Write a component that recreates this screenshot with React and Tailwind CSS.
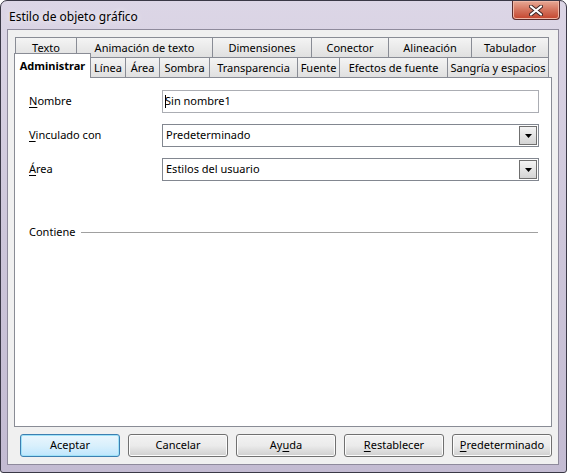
import React from "react";

const font = { fontFamily: '"Noto Sans", "Segoe UI", sans-serif' };

// back row of tabs, widths taken from the shared borders
const RowOne = [
  ["Texto", 62],
  ["Animación de texto", 137],
  ["Dimensiones", 100],
  ["Conector", 78],
  ["Alineación", 84],
  ["Tabulador", 78],
];

const RowTwo = [
  ["Línea", 36],
  ["Área", 35],
  ["Sombra", 51],
  ["Transparencia", 89],
  ["Fuente", 43],
  ["Efectos de fuente", 109],
  ["Sangría y espacios", 102],
];

const tabBase =
  "flex items-center justify-center border border-b-0 border-[#898c95] bg-gradient-to-b from-[#f4f4f4] to-[#e0e0e0] text-[11px] text-black leading-none -ml-px first:ml-0";

const Key = ({ children }) => <span className="underline underline-offset-2">{children}</span>;

const ComboButton = () => (
  <div className="mr-px ml-auto flex h-[19px] w-[18px] items-center justify-center border border-[#6f6f6f] bg-gradient-to-b from-[#f4f4f4] to-[#d4d4d4]">
    <svg width="7" height="4" viewBox="0 0 7 4">
      <path d="M0 0h7L3.5 4z" fill="#000" />
    </svg>
  </div>
);

const Field = ({ label, children }) => (
  <div className="flex h-[23px] items-center">
    <div className="w-[133px] text-[11px] text-black">{label}</div>
    {children}
  </div>
);

const Button = ({ children, primary }) => (
  <button
    className={
      "flex h-[23px] w-[100px] items-center justify-center rounded-[3px] border text-[11px] text-black " +
      (primary
        ? "border-[#3c7fb1] bg-gradient-to-b from-[#eaf6fd] via-[#d9f0fc] to-[#bee6fd] shadow-[inset_0_0_0_1px_#9fe2f8]"
        : "border-[#707070] bg-gradient-to-b from-[#f2f2f2] via-[#ebebeb] to-[#cfcfcf] shadow-[inset_0_0_0_1px_#fcfcfc]")
    }
  >
    {children}
  </button>
);

export default function App() {
  return (
    <div style={font} className="h-[473px] w-[567px] overflow-hidden bg-white">
      <div className="flex h-[473px] w-[567px] flex-col rounded-t-[7px] rounded-b-[3px] border border-[#3a3846] bg-gradient-to-b from-[#dcd6e6] via-[#cdc6da] to-[#c3bbd2]">
        {/* title bar */}
        <div className="flex h-[28px] items-start">
          <div className="pt-[10px] pl-[8px] text-[12px] leading-none text-black [text-shadow:0_0_6px_#ffffff]">
            Estilo de objeto gráfico
          </div>
          <div className="mr-[6px] ml-auto flex h-[19px] w-[48px] items-center justify-center rounded-b-[4px] border border-t-0 border-[#5a2c2c] bg-gradient-to-b from-[#e7a996] via-[#d4735d] to-[#c4432c] shadow-[inset_0_0_0_1px_#f0b7a6]">
            <svg width="14" height="11" viewBox="0 0 14 11">
              <path d="M2 1.5l10 8M12 1.5l-10 8" stroke="#3b2424" strokeWidth="4" strokeLinecap="round" />
              <path d="M2 1.5l10 8M12 1.5l-10 8" stroke="#ffffff" strokeWidth="2.2" strokeLinecap="round" />
            </svg>
          </div>
        </div>

        {/* client area */}
        <div className="mr-[7px] mb-[7px] ml-[6px] flex flex-1 flex-col border border-[#8e8a9c] bg-[#f0f0f0] px-[6px] pt-[7px] pb-[7px]">
          <div className="flex h-[20px] pl-px">
            {RowOne.map(([t, w]) => (
              <div key={t} style={{ width: w }} className={tabBase + " h-[20px]"}>
                {t}
              </div>
            ))}
          </div>
          <div className="flex h-[20px] items-end">
            <div className="relative z-10 -mb-px flex h-[25px] w-[77px] items-center justify-center border border-b-0 border-[#898c95] bg-white pb-[2px] text-[11px] leading-none font-bold text-black">
              Administrar
            </div>
            {RowTwo.map(([t, w]) => (
              <div key={t} style={{ width: w }} className={tabBase + " h-[20px]"}>
                {t}
              </div>
            ))}
          </div>

          {/* panel */}
          <div className="flex flex-1 flex-col border border-[#898c95] bg-white pt-[12px] pr-[12px] pl-[14px]">
            <div className="flex flex-col gap-[11px]">
              <Field label={<><Key>N</Key>ombre</>}>
                <div className="flex h-[23px] flex-1 items-center border border-[#abadb3] pl-[2px] text-[11px] text-black">
                  <span className="mr-[-1px] h-[13px] w-px bg-black" />
                  Sin nombre1
                </div>
              </Field>
              <Field label={<><Key>V</Key>inculado con</>}>
                <div className="flex h-[23px] flex-1 items-center border border-[#828790] pl-[3px] text-[11px] text-black">
                  Predeterminado
                  <ComboButton />
                </div>
              </Field>
              <Field label={<><Key>Á</Key>rea</>}>
                <div className="flex h-[23px] flex-1 items-center border border-[#828790] pl-[3px] text-[11px] text-black">
                  Estilos del usuario
                  <ComboButton />
                </div>
              </Field>
            </div>
            <div className="mt-[43px] mr-px flex items-center gap-[6px]">
              <span className="text-[11px] text-black">Contiene</span>
              <div className="h-px flex-1 bg-[#a0a0a0]" />
            </div>
          </div>

          {/* buttons */}
          <div className="mt-[7px] flex gap-[8px] pl-[6px]">
            <Button primary>Aceptar</Button>
            <Button>Cancelar</Button>
            <Button>
              Ay<Key>u</Key>da
            </Button>
            <Button>
              <Key>R</Key>establecer
            </Button>
            <Button>
              <Key>P</Key>redeterminado
            </Button>
          </div>
        </div>
      </div>
    </div>
  );
}
